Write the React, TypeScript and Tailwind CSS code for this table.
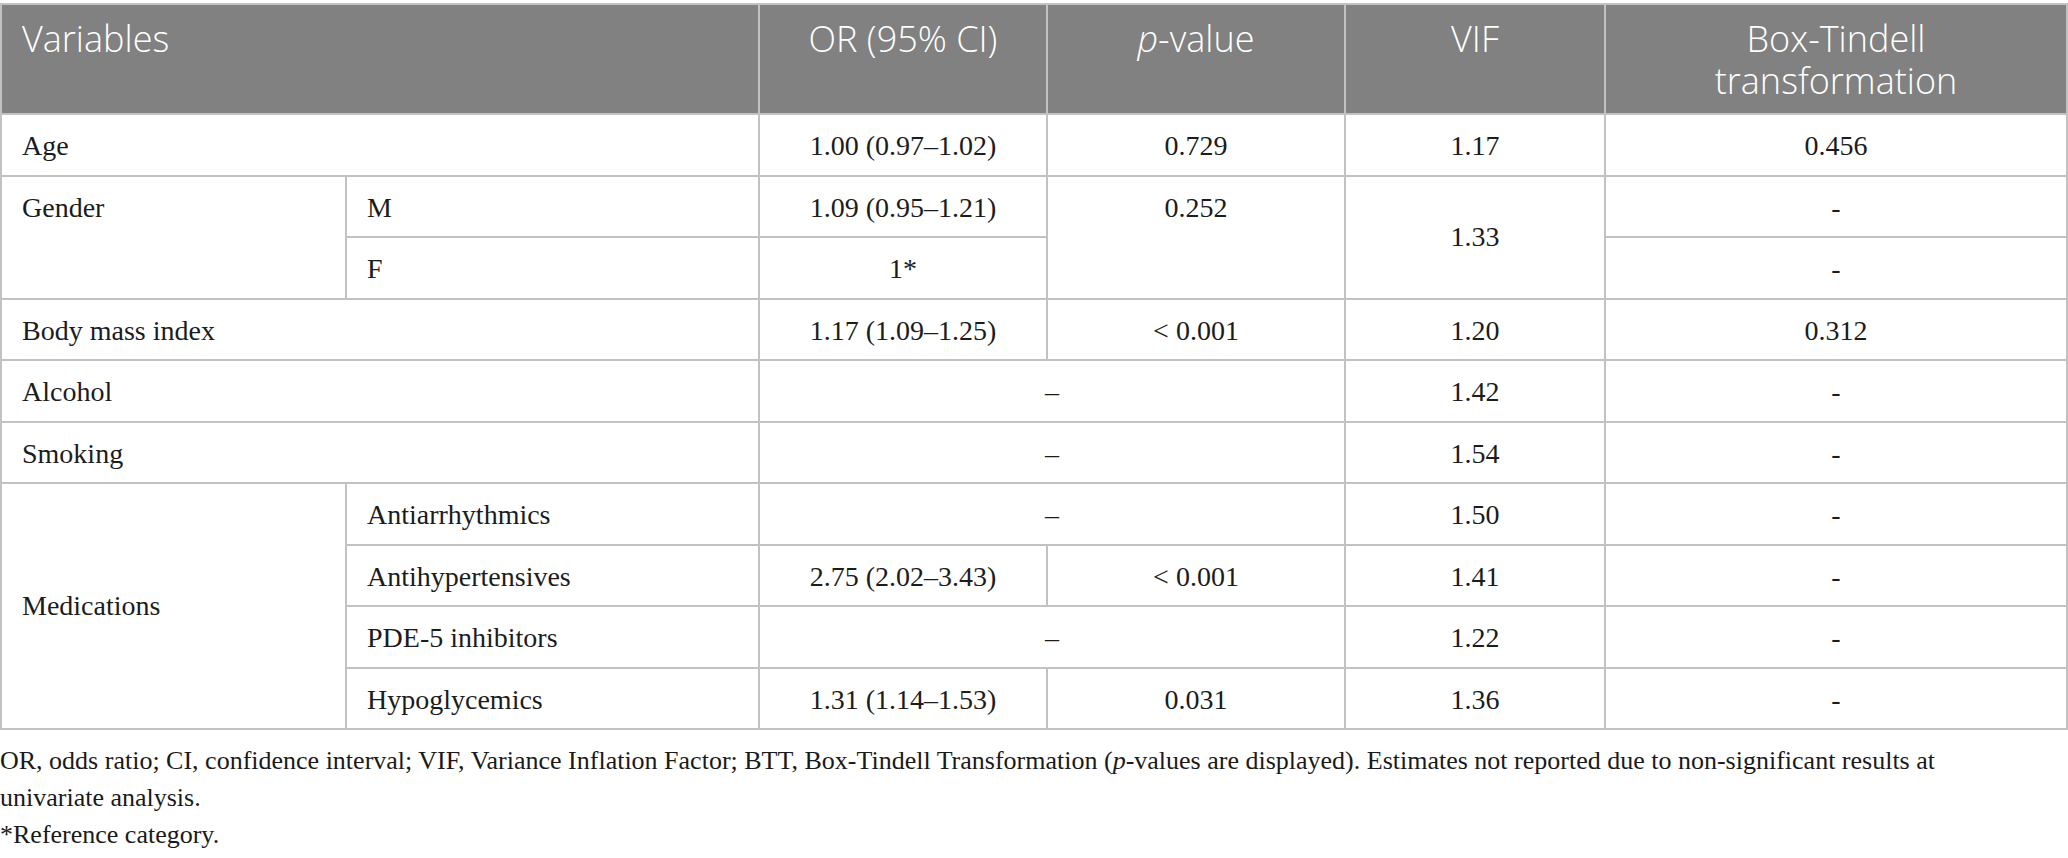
export default function App() {
  const th =
    "border-2 border-[#c2c2c2] px-5 pt-[13px] align-top font-['Open_Sans',sans-serif] font-light text-[36px] leading-[42px] text-white";
  const td = "border-2 border-[#c2c2c2] px-5 pt-[15px] align-top";
  const tdc = "border-2 border-[#c2c2c2] px-5 pt-[15px] align-top text-center";
  const row = "h-[61.5px]";

  return (
    <div className="min-h-screen bg-white pt-[3px] font-['Liberation_Serif',serif] text-[#1c1c1c]">
      <table className="w-full table-fixed border-collapse text-[28px] leading-[32px]">
        <colgroup>
          <col className="w-[345px]" />
          <col className="w-[413px]" />
          <col className="w-[288px]" />
          <col className="w-[298px]" />
          <col className="w-[260px]" />
          <col />
        </colgroup>
        <thead>
          <tr className="h-[110px] bg-[#808180]">
            <th colSpan={2} className={th + " text-left"}>
              Variables
            </th>
            <th className={th + " text-center"}>OR (95% CI)</th>
            <th className={th + " text-center"}>
              <i>p</i>-value
            </th>
            <th className={th + " text-center"}>VIF</th>
            <th className={th + " text-center"}>
              Box-Tindell
              <br />
              transformation
            </th>
          </tr>
        </thead>
        <tbody>
          <tr className={row}>
            <td colSpan={2} className={td}>Age</td>
            <td className={tdc}>1.00 (0.97–1.02)</td>
            <td className={tdc}>0.729</td>
            <td className={tdc}>1.17</td>
            <td className={tdc}>0.456</td>
          </tr>
          <tr className={row}>
            <td rowSpan={2} className={td}>Gender</td>
            <td className={td}>M</td>
            <td className={tdc}>1.09 (0.95–1.21)</td>
            <td rowSpan={2} className={tdc}>0.252</td>
            <td rowSpan={2} className="border-2 border-[#c2c2c2] px-5 text-center align-middle">
              1.33
            </td>
            <td className={tdc}>-</td>
          </tr>
          <tr className={row}>
            <td className={td}>F</td>
            <td className={tdc}>1*</td>
            <td className={tdc}>-</td>
          </tr>
          <tr className={row}>
            <td colSpan={2} className={td}>Body mass index</td>
            <td className={tdc}>1.17 (1.09–1.25)</td>
            <td className={tdc}>&lt; 0.001</td>
            <td className={tdc}>1.20</td>
            <td className={tdc}>0.312</td>
          </tr>
          <tr className={row}>
            <td colSpan={2} className={td}>Alcohol</td>
            <td colSpan={2} className={tdc}>–</td>
            <td className={tdc}>1.42</td>
            <td className={tdc}>-</td>
          </tr>
          <tr className={row}>
            <td colSpan={2} className={td}>Smoking</td>
            <td colSpan={2} className={tdc}>–</td>
            <td className={tdc}>1.54</td>
            <td className={tdc}>-</td>
          </tr>
          <tr className={row}>
            <td rowSpan={4} className="border-2 border-[#c2c2c2] px-5 align-middle">
              Medications
            </td>
            <td className={td}>Antiarrhythmics</td>
            <td colSpan={2} className={tdc}>–</td>
            <td className={tdc}>1.50</td>
            <td className={tdc}>-</td>
          </tr>
          <tr className={row}>
            <td className={td}>Antihypertensives</td>
            <td className={tdc}>2.75 (2.02–3.43)</td>
            <td className={tdc}>&lt; 0.001</td>
            <td className={tdc}>1.41</td>
            <td className={tdc}>-</td>
          </tr>
          <tr className={row}>
            <td className={td}>PDE-5 inhibitors</td>
            <td colSpan={2} className={tdc}>–</td>
            <td className={tdc}>1.22</td>
            <td className={tdc}>-</td>
          </tr>
          <tr className={row}>
            <td className={td}>Hypoglycemics</td>
            <td className={tdc}>1.31 (1.14–1.53)</td>
            <td className={tdc}>0.031</td>
            <td className={tdc}>1.36</td>
            <td className={tdc}>-</td>
          </tr>
        </tbody>
      </table>

      <div className="mt-3 text-[26px] leading-[37px] text-[#1a1a1a]">
        <p>
          OR, odds ratio; CI, confidence interval; VIF, Variance Inflation Factor; BTT, Box-Tindell
          Transformation (<i>p</i>-values are displayed). Estimates not reported due to
          non-significant results at
          <br />
          univariate analysis.
        </p>
        <p>*Reference category.</p>
      </div>
    </div>
  );
}
